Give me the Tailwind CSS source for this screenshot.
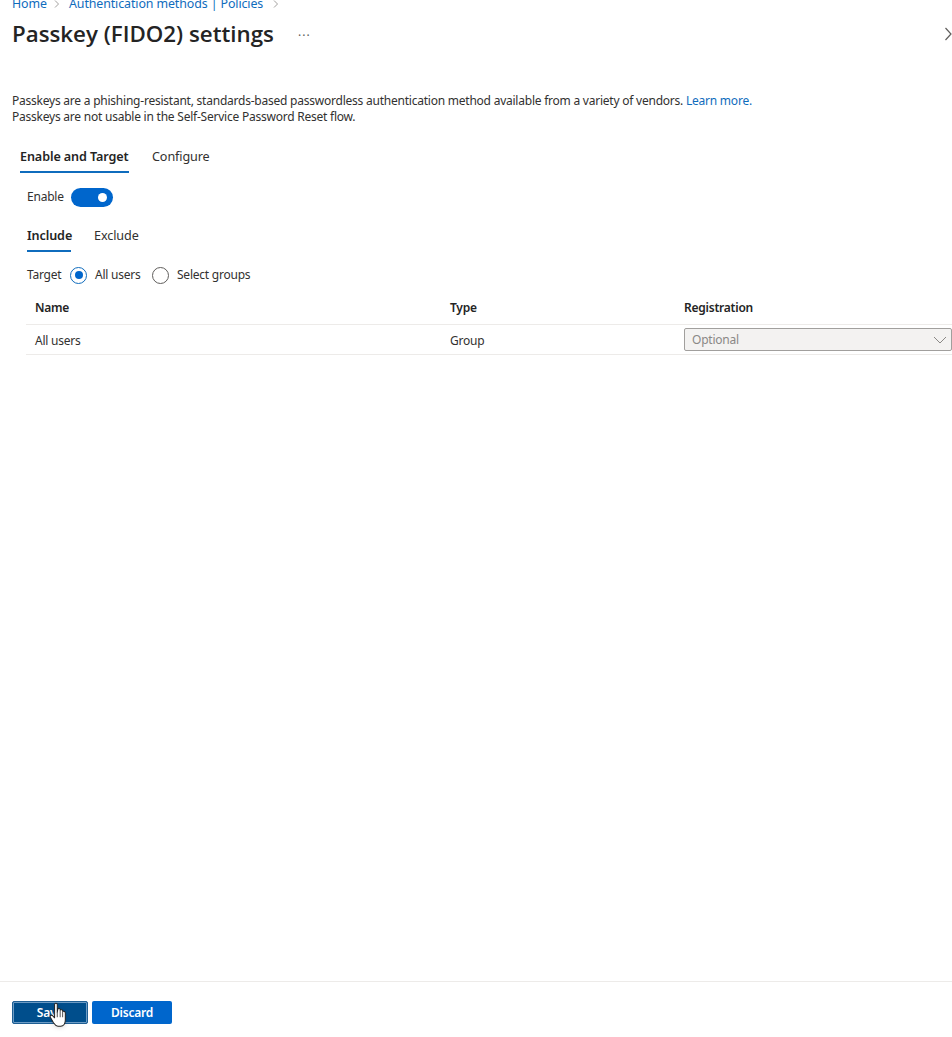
<!DOCTYPE html>
<html>
  <head>
    <meta charset="utf-8" />
    <script src="https://cdn.jsdelivr.net/npm/@tailwindcss/browser@4"></script>
  </head>
  <body class="bg-white">
    <div class="w-[952px] h-[1037px] overflow-hidden flex flex-col font-['Noto_Sans',sans-serif] text-[#323130] text-[12px] tracking-[-0.23px] relative">
      <!-- breadcrumb -->
      <div class="h-[8px] pl-3 flex items-center text-[#0f6cbd] text-[12.4px] tracking-[-0.1px] leading-[8px] whitespace-nowrap">
        <span class="w-[41px]">Home</span>
        <svg class="w-2 h-2" viewBox="0 0 8 8" fill="none" stroke="#8a8886" stroke-width="0.8"><path d="M2 0.5 L5.5 4 L2 7.5" /></svg>
        <span class="ml-[8px] w-[203px]">Authentication methods | Policies</span>
        <svg class="w-2 h-2" viewBox="0 0 8 8" fill="none" stroke="#8a8886" stroke-width="0.8"><path d="M2 0.5 L5.5 4 L2 7.5" /></svg>
      </div>

      <!-- title -->
      <div class="h-[52px] pl-3 pr-0 flex items-center">
        <h1 class="font-['Open_Sans',sans-serif] tracking-normal text-[22.3px] leading-[52px] font-semibold text-[#242424] w-[286px] whitespace-nowrap">Passkey (FIDO2) settings</h1>
        <span class="pt-[3px] text-[12px] text-[#605e5c] tracking-[1px]">···</span>
        <svg class="ml-auto w-[8px] h-[14px]" viewBox="0 0 8 14" fill="none" stroke="#605e5c" stroke-width="1.2"><path d="M1.5 1 L7 7 L1.5 13" /></svg>
      </div>

      <!-- description -->
      <div class="mt-[33px] pl-3 leading-[16px] whitespace-nowrap">
        <p>Passkeys are a phishing-resistant, standards-based passwordless authentication method available from a variety of vendors. <a class="text-[#0f6cbd]">Learn more.</a></p>
        <p>Passkeys are not usable in the Self-Service Password Reset flow.</p>
      </div>

      <!-- top tabs -->
      <div class="mt-[22px] ml-5 flex gap-[23px] text-[12.6px] tracking-[-0.1px] leading-[20px]">
        <div class="w-[109px] whitespace-nowrap pb-[4px] border-b-2 border-[#0f6cbd] font-semibold text-[#242424]">Enable and Target</div>
        <div>Configure</div>
      </div>

      <!-- enable toggle -->
      <div class="mt-[14px] ml-[27px] flex items-center h-[20px]">
        <span class="w-[44px]">Enable</span>
        <span class="w-[42px] h-[19px] rounded-full bg-[#0066cc] flex items-center justify-end pr-[6px]">
          <span class="w-[9px] h-[9px] rounded-full bg-white"></span>
        </span>
      </div>

      <!-- include tabs -->
      <div class="mt-[19px] ml-[27px] flex gap-[23px] text-[12.6px] tracking-[-0.1px] leading-[20px]">
        <div class="w-[44px] pb-[4px] border-b-2 border-[#0f6cbd] font-semibold text-[#242424]">Include</div>
        <div>Exclude</div>
      </div>

      <!-- target radios -->
      <div class="mt-[13px] ml-[27px] flex items-center h-[20px]">
        <span class="w-[44px]">Target</span>
        <span class="-ml-[1px] w-[17px] h-[17px] rounded-full border border-[#0f6cbd] flex items-center justify-center">
          <span class="w-[8px] h-[8px] rounded-full bg-[#0066cc]"></span>
        </span>
        <span class="ml-[8px] w-[57px]">All users</span>
        <span class="w-[17px] h-[17px] rounded-full border border-[#605e5c]"></span>
        <span class="ml-[8px]">Select groups</span>
      </div>

      <!-- table -->
      <div class="mt-[5px] ml-[26px]">
        <div class="h-[35px] grid grid-cols-[415px_234px_1fr] pl-[9px] items-center font-semibold text-[#242424] border-b border-[#edebe9]">
          <span class="pt-[1px]">Name</span>
          <span class="pt-[1px]">Type</span>
          <span class="pt-[1px]">Registration</span>
        </div>
        <div class="h-[30px] grid grid-cols-[415px_234px_1fr] pl-[9px] items-center border-b border-[#edebe9]">
          <span class="pt-[3px]">All users</span>
          <span class="pt-[3px]">Group</span>
          <div class="h-[23px] bg-[#f3f2f1] border border-[#a19f9d] rounded-[2px] flex items-center justify-between pl-[7px] pr-[4px] text-[#8a8886]">
            <span class="pt-[1px]">Optional</span>
            <svg class="w-[14px] h-[8px]" viewBox="0 0 14 8" fill="none" stroke="#8a8886" stroke-width="1"><path d="M1 1 L7 7 L13 1" /></svg>
          </div>
        </div>
      </div>

      <!-- footer -->
      <div class="mt-auto h-[56px] border-t border-[#edebe9] pl-3 pt-[19px] flex gap-[4px] items-start font-semibold text-white">
        <button class="relative w-[76px] h-[23px] rounded-[2px] bg-[#004e8c] border border-[#1f5f94] ring-1 ring-inset ring-[#6d9bc4] text-center leading-[21px]">
          Save
          <svg class="absolute left-[36px] top-[0px] w-[19px] h-[26px] drop-shadow-sm" viewBox="0 0 17 23">
            <path d="M5 2 C5 0.6 7.4 0.6 7.4 2 L7.4 9 L8 5.9 C9.4 5.2 10 5.8 10 7 C11.4 6.4 12.2 7 12.2 8.2 C13.6 7.8 14.6 8.4 14.6 10 L14.6 16 C14.6 19 13 21.5 10.5 21.5 L8 21.5 C6 21.5 5 20 4 18.5 L1.2 13.6 C0.5 12.3 2 11 3.2 12 L5 14 Z" fill="#fff" stroke="#222" stroke-width="0.9" stroke-linejoin="round" />
            <path d="M7.4 9 V13.5 M10 7.2 V13.5 M12.2 8.4 V13.5" fill="none" stroke="#222" stroke-width="0.7" />
          </svg>
        </button>
        <button class="w-[80px] h-[23px] rounded-[2px] bg-[#0066cc] text-center leading-[21px]">Discard</button>
      </div>
    </div>
  </body>
</html>
